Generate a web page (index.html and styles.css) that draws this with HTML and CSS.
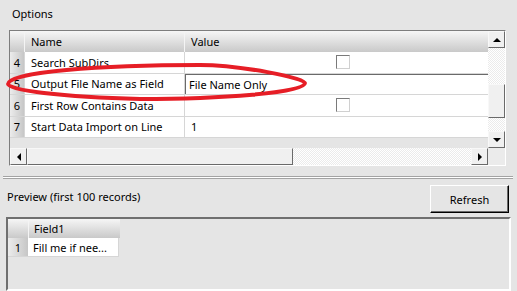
FILE: index.html
```html
<!DOCTYPE html>
<html lang="en">
<head>
    <meta charset="UTF-8">
    <title>Options</title>
    <link rel="stylesheet" href="styles.css">
</head>
<body>
    <div class="options-label">Options</div>
    <div class="grid-box">
        <div class="grid-main">
            <div class="row head">
                <div class="num"></div>
                <div class="name">Name</div>
                <div class="value">Value</div>
            </div>
            <div class="row">
                <div class="num">4</div>
                <div class="name">Search SubDirs</div>
                <div class="value center"><span class="check"></span></div>
            </div>
            <div class="row">
                <div class="num">5</div>
                <div class="name">Output File Name as Field</div>
                <div class="value"><div class="edit">File Name Only</div></div>
            </div>
            <div class="row">
                <div class="num">6</div>
                <div class="name">First Row Contains Data</div>
                <div class="value center"><span class="check"></span></div>
            </div>
            <div class="row">
                <div class="num">7</div>
                <div class="name">Start Data Import on Line</div>
                <div class="value">1</div>
            </div>
        </div>
        <div class="vscroll">
            <div class="sb-btn"><span class="arrow up"></span></div>
            <div class="track top-track"></div>
            <div class="thumb"></div>
            <div class="track"></div>
            <div class="sb-btn"><span class="arrow down"></span></div>
        </div>
        <div class="hscroll">
            <div class="sb-btn"><span class="arrow left"></span></div>
            <div class="thumb h-thumb"></div>
            <div class="track"></div>
            <div class="sb-btn"><span class="arrow right"></span></div>
        </div>
        <div class="corner"></div>
    </div>

    <div class="separator"></div>

    <div class="preview-bar">
        <span class="preview-label">Preview (first 100 records)</span>
        <button class="refresh">Refresh</button>
    </div>
    <div class="preview-box">
        <div class="prow phead">
            <div class="pnum"></div>
            <div class="pcell">Field1</div>
        </div>
        <div class="prow">
            <div class="pnum">1</div>
            <div class="pcell data">Fill me if nee...</div>
        </div>
    </div>

    <svg class="mark" width="517" height="291" viewBox="0 0 517 291">
        <path d="M8,84 C8,72 100,65 200,65 C240,65 305,78 305,83 C305,93 220,99 140,99 C60,97 8,90 8,84 Z"
              fill="none" stroke="#e61e26" stroke-width="4"/>
    </svg>
</body>
</html>
```

FILE: styles.css
```css
body {
    margin: 0;
    width: 517px;
    height: 291px;
    overflow: hidden;
    background-color: #e5e5e5;
    font-family: "Noto Sans", sans-serif;
    font-size: 11px;
    color: #000;
    position: relative;
}
.options-label {
    height: 24px;
    padding: 6px 0 0 12px;
    line-height: 16px;
}
.grid-box {
    margin-left: 9px;
    width: 495px;
    display: grid;
    grid-template-columns: 478px 17px;
    grid-template-rows: 117px 17px;
    border: 1px solid;
    border-color: #7d7d7d #fff #fff #7d7d7d;
}
.grid-main {
    background-color: #e5e5e5;
    overflow: hidden;
}
.row {
    display: flex;
    height: 21.5px;
    box-sizing: border-box;
    border-bottom: 1px solid #d6d6d6;
    background-color: #fff;
}
.row > div {
    display: flex;
    align-items: center;
    box-sizing: border-box;
}
.row.head {
    height: 21px;
    background: linear-gradient(#f6f6f6, #c9c9c9);
    border-bottom: none;
}
.num {
    width: 15px;
    justify-content: center;
    background: linear-gradient(to right, #ececec, #c6c6c6);
    border-right: 1px solid #d6d6d6;
}
.head .num {
    background: none;
    border-right: 1px solid #f4f4f4;
}
.name {
    width: 160px;
    padding-left: 6px;
    border-right: 1px solid #d6d6d6;
}
.head .name {
    border-right: 1px solid #f4f4f4;
}
.value {
    flex: 1;
    padding-left: 6px;
}
.value.center {
    padding-left: 151px;
}
.check {
    width: 12px;
    height: 12px;
    background-color: #fff;
    border: 1px solid;
    border-color: #7a7a7a #d0d0d0 #d0d0d0 #7a7a7a;
}
.row .value:has(.edit) {
    padding: 0;
    align-items: stretch;
}
.edit {
    flex: 1;
    display: flex;
    align-items: center;
    padding-left: 3px;
    border-top: 1px solid #6a6a6a;
    border-left: 1px solid #6a6a6a;
    background-color: #fff;
}
.vscroll {
    display: flex;
    flex-direction: column;
}
.hscroll {
    display: flex;
}
.sb-btn {
    width: 17px;
    height: 17px;
    box-sizing: border-box;
    flex: none;
    display: flex;
    align-items: center;
    justify-content: center;
    background-color: #f0f0f0;
    border: 1px solid;
    border-color: #f8f8f8 #6a6a6a #6a6a6a #f8f8f8;
}
.track {
    flex: 1;
    background: repeating-conic-gradient(#fff 0 25%, #ebebeb 0 50%) 0 0 / 2px 2px;
}
.top-track {
    flex: none;
    height: 36px;
}
.thumb {
    height: 34px;
    flex: none;
    box-sizing: border-box;
    background-color: #f0f0f0;
    border: 1px solid;
    border-color: #f8f8f8 #6a6a6a #6a6a6a #f8f8f8;
}
.thumb.h-thumb {
    height: auto;
    width: 266px;
}
.arrow {
    width: 0;
    height: 0;
    border: 4px solid transparent;
}
.arrow.up {
    border-bottom-color: #000;
    border-top-width: 0;
}
.arrow.down {
    border-top-color: #000;
    border-bottom-width: 0;
}
.arrow.left {
    border-right-color: #000;
    border-left-width: 0;
}
.arrow.right {
    border-left-color: #000;
    border-right-width: 0;
}
.corner {
    background-color: #ebebeb;
}
.separator {
    margin: 10px 4px 0 3px;
    height: 1px;
    background-color: #fff;
    border-top: 1px solid #a3a3a3;
    border-bottom: 1px solid #a3a3a3;
}
.preview-bar {
    display: flex;
    justify-content: space-between;
    align-items: center;
    height: 38px;
    padding: 0 8px 0 7px;
}
.preview-label {
    margin-top: -4px;
}
.refresh {
    width: 79px;
    height: 28px;
    font-family: inherit;
    font-size: 11px;
    background-color: #e5e5e5;
    border: 1px solid;
    border-color: #fff #000 #000 #fff;
    box-shadow: inset -1px -1px #6a6a6a;
    padding: 0;
    margin-top: 2px;
}
.preview-box {
    margin-left: 6px;
    width: 501px;
    height: 70px;
    border: 2px solid;
    border-color: #6f6f6f #fff #fff #6f6f6f;
}
.prow {
    display: flex;
    height: 19px;
}
.pnum {
    width: 20px;
    display: flex;
    align-items: center;
    justify-content: center;
    background: linear-gradient(to right, #ececec, #c6c6c6);
    border-bottom: 1px solid #d6d6d6;
}
.phead .pnum {
    background: linear-gradient(#f6f6f6, #c9c9c9);
    border-bottom: none;
    border-right: 1px solid #f4f4f4;
}
.pcell {
    width: 91px;
    box-sizing: border-box;
    display: flex;
    align-items: center;
    padding-left: 5px;
    background: linear-gradient(#f6f6f6, #c9c9c9);
}
.pcell.data {
    background: #fff;
    border-right: 1px solid #d6d6d6;
    border-bottom: 1px solid #d6d6d6;
}
.mark {
    position: absolute;
    left: 0;
    top: 0;
    pointer-events: none;
}
```
